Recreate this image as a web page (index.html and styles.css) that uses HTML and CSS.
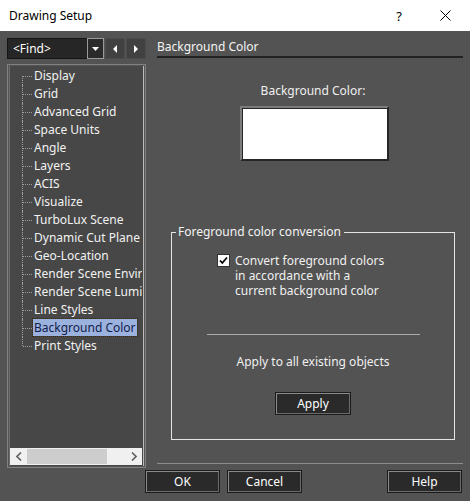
FILE: index.html
```html
<!DOCTYPE html>
<html lang="en">
<head>
  <meta charset="UTF-8">
  <meta name="viewport" content="width=device-width, initial-scale=1.0">
  <title>Drawing Setup</title>
  <link rel="stylesheet" href="styles.css">
</head>
<body>
  <div class="dialog">
    <div class="titlebar">
      <span class="title">Drawing Setup</span>
      <span class="tb-help">?</span>
      <span class="tb-close">
        <svg width="11" height="11" viewBox="0 0 11 11"><path d="M0.5 0.5L10.5 10.5M10.5 0.5L0.5 10.5" stroke="#000" stroke-width="1" fill="none"/></svg>
      </span>
    </div>

    <div class="main">
      <div class="left-col">
        <div class="toolbar">
          <div class="combo">
            <span class="combo-text">&lt;Find&gt;</span>
            <span class="combo-btn">
              <svg width="7" height="4" viewBox="0 0 7 4"><path d="M0 0H7L3.5 4Z" fill="#fff"/></svg>
            </span>
          </div>
          <span class="nav-btn">
            <svg width="4" height="8" viewBox="0 0 4 8"><path d="M4 0V8L0 4Z" fill="#fff"/></svg>
          </span>
          <span class="nav-btn">
            <svg width="4" height="8" viewBox="0 0 4 8"><path d="M0 0V8L4 4Z" fill="#fff"/></svg>
          </span>
        </div>

        <div class="tree-panel">
          <ul class="tree">
            <li>Display</li>
            <li>Grid</li>
            <li>Advanced Grid</li>
            <li>Space Units</li>
            <li>Angle</li>
            <li>Layers</li>
            <li>ACIS</li>
            <li>Visualize</li>
            <li>TurboLux Scene</li>
            <li>Dynamic Cut Plane</li>
            <li>Geo-Location</li>
            <li>Render Scene Environment</li>
            <li>Render Scene Luminance</li>
            <li>Line Styles</li>
            <li><span class="selected">Background Color</span></li>
            <li>Print Styles</li>
          </ul>
          <div class="hscroll">
            <span class="sb-arrow">
              <svg width="6" height="9" viewBox="0 0 6 9"><path d="M5 0.5L1 4.5L5 8.5" stroke="#606060" stroke-width="1.6" fill="none"/></svg>
            </span>
            <span class="sb-track"><span class="sb-thumb"></span></span>
            <span class="sb-arrow">
              <svg width="6" height="9" viewBox="0 0 6 9"><path d="M1 0.5L5 4.5L1 8.5" stroke="#606060" stroke-width="1.6" fill="none"/></svg>
            </span>
          </div>
        </div>
      </div>

      <div class="right-col">
        <div class="page-title">Background Color</div>

        <div class="bg-label">Background Color:</div>
        <div class="color-box"></div>

        <fieldset class="group">
          <legend>Foreground color conversion</legend>
          <div class="check-row">
            <span class="checkbox">
              <svg width="11" height="11" viewBox="0 0 11 11"><path d="M2 5.5L4.3 8L9 2.5" stroke="#000" stroke-width="1.8" fill="none"/></svg>
            </span>
            <span class="check-text">Convert foreground colors<br>in accordance with a<br>current background color</span>
          </div>
          <div class="separator"></div>
          <div class="apply-label">Apply to all existing objects</div>
          <button class="btn btn-apply">Apply</button>
        </fieldset>

        <div class="bottom-line"></div>
      </div>
    </div>

    <div class="footer">
      <button class="btn">OK</button>
      <button class="btn">Cancel</button>
      <span class="spacer"></span>
      <button class="btn">Help</button>
    </div>
  </div>
</body>
</html>
```

FILE: styles.css
```css
body {
  margin: 0;
  padding: 0;
  font-family: "Noto Sans", "Liberation Sans", sans-serif;
  font-size: 12px;
  background-color: #535353;
}

.dialog {
  width: 470px;
  height: 501px;
  background-color: #535353;
  color: #f0f0f0;
  overflow: hidden;
}

.titlebar {
  height: 31px;
  background-color: #ffffff;
  color: #000000;
  display: flex;
  align-items: center;
}

.title {
  padding-left: 9px;
  flex: 1;
  font-size: 12px;
}

.tb-help {
  width: 46px;
  text-align: center;
  font-size: 13px;
}

.tb-close {
  width: 46px;
  display: flex;
  justify-content: center;
  margin-right: 2px;
}

.main {
  display: flex;
  padding: 0 7px;
  height: 437px;
}

.left-col {
  width: 139px;
  display: flex;
  flex-direction: column;
}

.toolbar {
  display: flex;
  margin-top: 7px;
  height: 21px;
}

.combo {
  width: 98px;
  display: flex;
  background-color: #262626;
  border: 1px solid #141414;
  box-sizing: border-box;
}

.combo-text {
  flex: 1;
  padding-left: 5px;
  line-height: 19px;
  color: #ffffff;
}

.combo-btn {
  width: 15px;
  border: 1px solid #9a9a9a;
  margin: -1px -1px -1px 0;
  display: flex;
  align-items: center;
  justify-content: center;
  background-color: #2a2a2a;
}

.nav-btn {
  width: 20px;
  margin-left: 1px;
  background-color: #414141;
  border: 1px solid #4c4c4c;
  box-sizing: border-box;
  display: flex;
  align-items: center;
  justify-content: center;
}

.tree-panel {
  margin-top: 5px;
  height: 404px;
  border: 1px solid #808080;
  box-shadow: inset 0 0 0 1px #555555, inset -2px 0 0 0 #bcbcbc, inset 2px 0 0 0 #6e6e6e;
  background-color: #474747;
  box-sizing: border-box;
  display: flex;
  flex-direction: column;
  padding: 2px 3px 2px 2px;
}

.tree {
  list-style: none;
  margin: 0;
  padding: 0;
  flex: 1;
  overflow: hidden;
}

.tree li {
  position: relative;
  height: 18px;
  line-height: 18px;
  padding-left: 24px;
  white-space: nowrap;
  color: #f2f2f2;
}

.tree li::before {
  content: "";
  position: absolute;
  left: 12px;
  top: 0;
  bottom: 0;
  border-left: 1px dotted #a0a0a0;
}

.tree li:first-child::before {
  top: 9px;
}

.tree li:last-child::before {
  bottom: 9px;
}

.tree li::after {
  content: "";
  position: absolute;
  left: 13px;
  top: 9px;
  width: 9px;
  border-top: 1px dotted #a0a0a0;
}

.tree .selected {
  background-color: #9cb2de;
  color: #10204a;
  outline: 1px dotted #3a2a10;
  padding: 0 1px;
  margin-left: -1px;
}

.hscroll {
  height: 17px;
  background-color: #f0f0f0;
  display: flex;
  align-items: center;
}

.sb-arrow {
  width: 17px;
  display: flex;
  justify-content: center;
}

.sb-track {
  flex: 1;
  height: 15px;
}

.sb-thumb {
  display: block;
  width: 80px;
  height: 15px;
  background-color: #cdcdcd;
}

.right-col {
  margin-left: 11px;
  width: 306px;
  display: flex;
  flex-direction: column;
}

.page-title {
  margin-top: 6px;
  height: 19px;
  line-height: 19px;
  border-bottom: 2px solid #222222;
  color: #f4f4f4;
}

.bg-label {
  margin-top: 25px;
  line-height: 16px;
  text-align: center;
  padding-left: 6px;
}

.color-box {
  width: 149px;
  height: 55px;
  margin: 7px 0 0 83px;
  background-color: #ffffff;
  box-sizing: border-box;
  border: 2px solid;
  border-color: #7c7c7c #262626 #262626 #7c7c7c;
  box-shadow: inset 1px 1px 0 #262626;
}

.group {
  margin: 63px 8px 0 14px;
  padding: 13px 0 0 0;
  height: 216px;
  box-sizing: border-box;
  border: 1px solid #e4e4e4;
  display: flex;
  flex-direction: column;
  align-items: center;
}

.group legend {
  padding: 0 3px 0 2px;
  margin-left: 4px;
  line-height: 16px;
  color: #f4f4f4;
}

.check-row {
  display: flex;
  align-self: flex-start;
  margin-left: 45px;
}

.checkbox {
  width: 13px;
  height: 13px;
  box-sizing: border-box;
  background-color: #ffffff;
  border: 1px solid #333333;
  margin-top: 1px;
  display: flex;
  align-items: center;
  justify-content: center;
}

.check-text {
  margin-left: 5px;
  line-height: 15px;
}

.separator {
  width: 213px;
  height: 0;
  border-top: 1px solid #aaaaaa;
  margin-top: 36px;
}

.apply-label {
  margin-top: 19px;
  line-height: 16px;
}

.btn {
  width: 75px;
  height: 23px;
  font-family: inherit;
  font-size: 12px;
  color: #ffffff;
  background-color: #2a2a2a;
  border: 1px solid #1c1c1c;
  box-shadow: inset 1px 1px 0 #8a8a8a, inset -1px -1px 0 #6a6a6a;
  padding: 0;
}

.btn-apply {
  margin-top: 22px;
  width: 76px;
}

.bottom-line {
  margin-top: auto;
  margin-bottom: 4px;
  border-top: 1px solid #8c8c8c;
}

.footer {
  display: flex;
  padding: 2px 8px 0 145px;
  gap: 7px;
}

.spacer {
  flex: 1;
}
```
